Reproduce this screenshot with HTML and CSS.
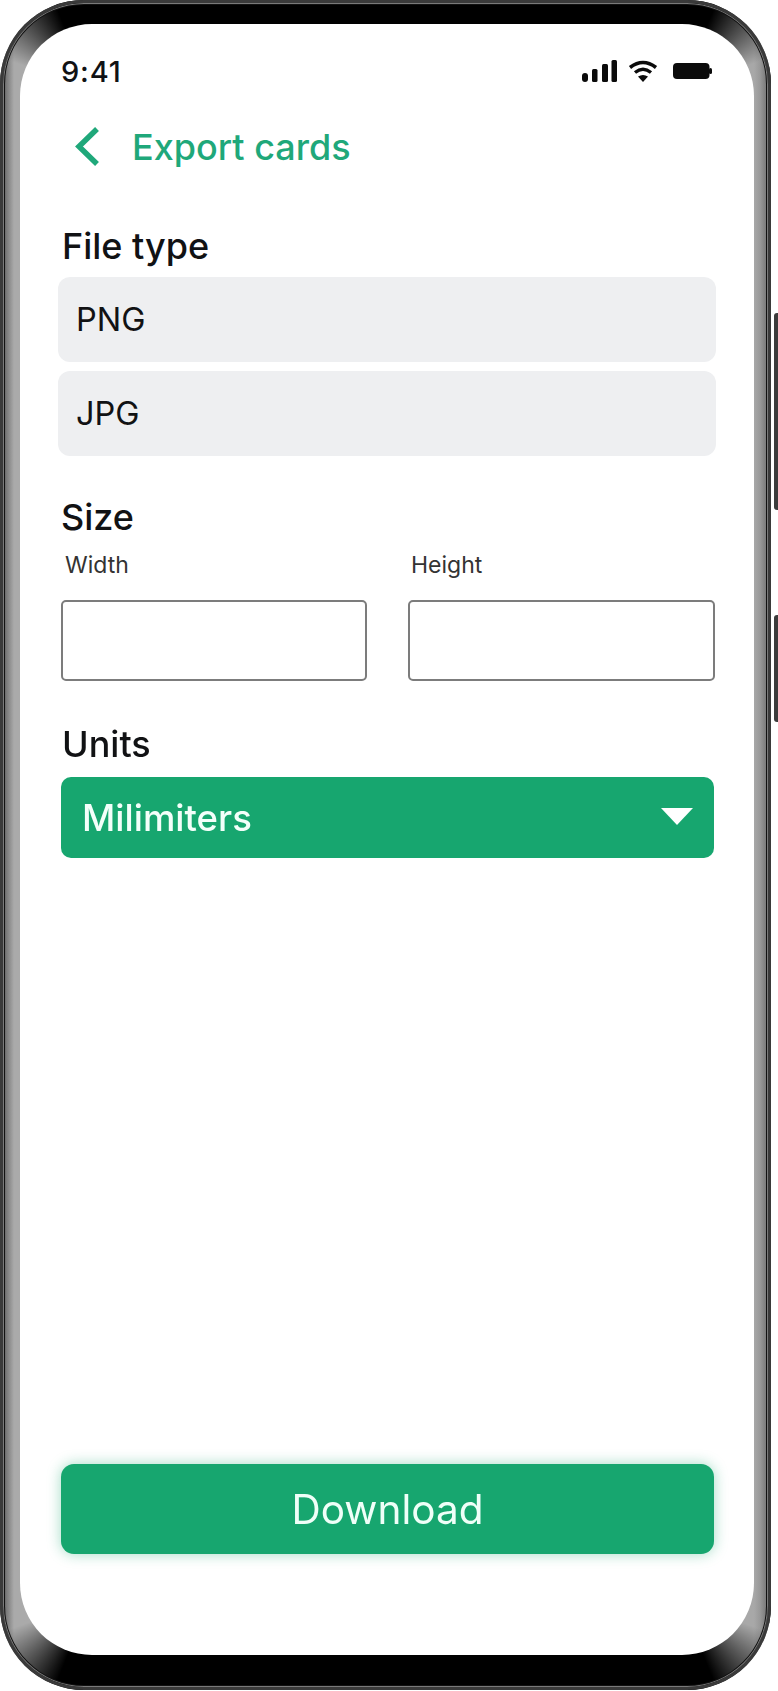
FILE: index.html
```html
<!DOCTYPE html>
<html lang="en">
<head>
    <meta charset="UTF-8">
    <meta name="viewport" content="width=device-width, initial-scale=1.0">
    <title>Export cards</title>
    <link rel="stylesheet" href="styles.css">
</head>
<body>
    <div class="phone">
        <span class="side-button side-button-top"></span>
        <span class="side-button side-button-bottom"></span>
        <div class="screen">
            <div class="status-bar">
                <span class="clock">9:41</span>
                <div class="status-icons">
                    <svg class="icon-signal" width="35" height="22" viewBox="0 0 35 22">
                        <rect x="0" y="13" width="6" height="9" rx="3"/>
                        <rect x="10" y="9" width="5.5" height="13" rx="1.5"/>
                        <rect x="20" y="4" width="6" height="18" rx="1.5"/>
                        <rect x="29.5" y="0" width="5.5" height="22" rx="1.5"/>
                    </svg>
                    <svg class="icon-wifi" width="30" height="22" viewBox="0 0 30 22">
                        <path d="M2 7.5Q15 -2.5 28 7.5" fill="none" stroke="#0b0b0b" stroke-width="3.6"/>
                        <path d="M7 12.5Q15 6 23 12.5" fill="none" stroke="#0b0b0b" stroke-width="3.4"/>
                        <path d="M10 16.5Q15 13.5 20 16.5L15 22Z"/>
                    </svg>
                    <svg class="icon-battery" width="39" height="16" viewBox="0 0 39 16">
                        <rect x="0" y="0" width="36.5" height="16" rx="4"/>
                        <rect x="36" y="5" width="3" height="6" rx="1.5"/>
                    </svg>
                </div>
            </div>

            <div class="top-bar">
                <svg class="icon-back" width="26" height="40" viewBox="0 0 26 40">
                    <path d="M23 2L5 19.5L23 37" fill="none" stroke="#1fa87a" stroke-width="5.5"/>
                </svg>
                <span class="top-bar-title">Export cards</span>
            </div>

            <h2 class="section-title section-file">File type</h2>
            <div class="option-list">
                <div class="option-row">PNG</div>
                <div class="option-row">JPG</div>
            </div>

            <h2 class="section-title section-size">Size</h2>
            <div class="size-fields">
                <label class="size-field">
                    <span class="size-label">Width</span>
                    <input type="text" class="size-input">
                </label>
                <label class="size-field size-field-height">
                    <span class="size-label">Height</span>
                    <input type="text" class="size-input">
                </label>
            </div>

            <h2 class="section-title section-units">Units</h2>
            <div class="units-select">
                <span>Milimiters</span>
                <span class="units-arrow"></span>
            </div>

            <button class="download-button">Download</button>
        </div>
    </div>
</body>
</html>
```

FILE: styles.css
```css
:root {
    --green: #17a66f;
    --green-text: #1fa87a;
    --ink: #111214;
}
body {
    margin: 0;
    background-color: #fff;
    font-family: Inter, "Liberation Sans", sans-serif;
    color: var(--ink);
    overflow: hidden;
}
.phone {
    position: relative;
    box-sizing: border-box;
    width: 771px;
    height: 1690px;
    padding: 24px 17px 35px 20px;
    border-radius: 84px;
    background:
        conic-gradient(from 270deg at 100% 100%, transparent 20deg, #000 68deg) 0 0 / 90px 90px no-repeat,
        conic-gradient(from 0deg at 0 100%, #000 22deg, transparent 70deg) 100% 0 / 90px 90px no-repeat,
        conic-gradient(from 180deg at 100% 0, #000 22deg, transparent 70deg) 0 100% / 90px 90px no-repeat,
        conic-gradient(from 90deg at 0 0, transparent 20deg, #000 68deg) 100% 100% / 90px 90px no-repeat,
        linear-gradient(#000, #000) 50% 0 / calc(100% - 180px) 30px no-repeat,
        linear-gradient(#000, #000) 50% 100% / calc(100% - 180px) 36px no-repeat,
        linear-gradient(to right, #333 0, #555 4px, #777 6px, #aaa 14px, #a8a8a8 754px, #999 760px, #6c6c6c 769px, #000 769px);
}
.phone::before {
    content: "";
    position: absolute;
    inset: 0;
    border: 3px solid #3a3a3a;
    border-radius: 84px;
    box-shadow: inset 0 0 0 1px #7a7a7a, inset 0 0 0 2px #111;
}
.side-button {
    position: absolute;
    left: 774px;
    width: 4px;
    background-color: #3c3c3c;
    border-radius: 3px 0 0 3px;
}
.side-button-top {
    top: 313px;
    height: 197px;
}
.side-button-bottom {
    top: 615px;
    height: 107px;
}
.screen {
    position: relative;
    box-sizing: border-box;
    display: flex;
    flex-direction: column;
    height: 100%;
    padding: 0 40px 101px 41px;
    background-color: #fff;
    border-radius: 72px;
    filter: blur(0.5px);
}

/* Status bar */
.status-bar {
    display: flex;
    justify-content: space-between;
    align-items: center;
    height: 36px;
    margin-top: 29px;
}
.clock {
    font-size: 29px;
    font-weight: 500;
    letter-spacing: 0.8px;
}
.status-icons {
    display: flex;
    align-items: center;
    gap: 11px;
    margin-right: 2px;
}
.status-icons svg {
    display: block;
    fill: #0b0b0b;
}
.icon-wifi {
    margin-right: 4px;
}

/* Header */
.top-bar {
    display: flex;
    align-items: center;
    gap: 32px;
    height: 40px;
    margin-top: 38px;
    padding-left: 13px;
}
.icon-back {
    display: block;
}
.top-bar-title {
    font-size: 36px;
    font-weight: 500;
    color: var(--green-text);
}

.section-title {
    margin: 0;
    font-size: 36px;
    line-height: 40px;
    font-weight: 500;
    color: var(--ink);
}
.section-file {
    margin-top: 59px;
    padding-left: 1px;
}
.section-size {
    margin-top: 41px;
}
.section-units {
    margin-top: 43px;
    padding-left: 1px;
}

/* File type */
.option-list {
    display: flex;
    flex-direction: column;
    gap: 9px;
    margin: 11px -2px 0 -3px;
}
.option-row {
    display: flex;
    align-items: center;
    box-sizing: border-box;
    height: 85px;
    padding-left: 18px;
    font-size: 32.5px;
    background-color: #eeeff1;
    border-radius: 12px;
}

/* Size */
.size-fields {
    display: flex;
    gap: 41px;
    margin: 13px -1px 0 0;
}
.size-field {
    display: flex;
    flex-direction: column;
    width: 306px;
}
.size-field-height {
    width: 307px;
}
.size-field-height .size-label {
    padding-left: 3px;
}
.size-label {
    padding-left: 4px;
    font-size: 23px;
    line-height: 30px;
    color: #333;
    margin-bottom: 20px;
}
.size-input {
    box-sizing: border-box;
    width: 100%;
    height: 81px;
    border: 2px solid #7c7c7c;
    border-radius: 5px;
    background: #fff;
    outline: none;
}

/* Units */
.units-select {
    display: flex;
    justify-content: space-between;
    align-items: center;
    box-sizing: border-box;
    height: 81px;
    margin-top: 13px;
    padding: 0 21px;
    background-color: var(--green);
    border-radius: 10px;
    color: #f3fffa;
    font-size: 36.5px;
    font-weight: 500;
}
.units-arrow {
    width: 0;
    height: 0;
    margin-top: -2px;
    border-left: 16px solid transparent;
    border-right: 16px solid transparent;
    border-top: 17px solid #fff;
}

/* Download */
.download-button {
    height: 90px;
    margin-top: auto;
    padding: 0;
    border: none;
    border-radius: 13px;
    background-color: var(--green);
    box-shadow: 0 0 14px rgba(23, 166, 111, 0.4);
    color: #effff8;
    font-family: inherit;
    font-size: 40.5px;
}
```
